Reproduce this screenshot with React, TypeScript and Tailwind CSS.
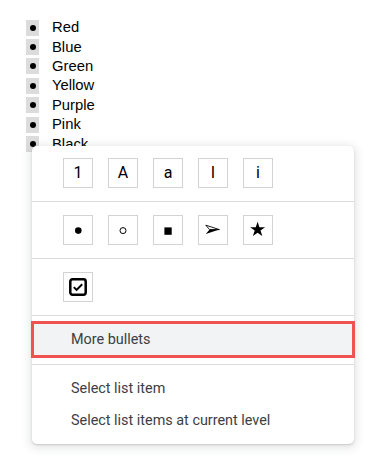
import type { ReactNode } from "react";

const COLORS = ["Red", "Blue", "Green", "Yellow", "Purple", "Pink", "Black"];

function GlyphBox({ children }: { children: ReactNode }) {
  return (
    <div className="w-[30px] h-[30px] border border-[#d3d3d3] flex items-center justify-center text-[16px] leading-none text-black">
      {children}
    </div>
  );
}

// svg drawn in box coordinates (0..30), the 1px border eats the edge
function BoxSvg({ children }: { children: ReactNode }) {
  return (
    <svg width="28" height="28" viewBox="1 1 28 28" className="block">
      {children}
    </svg>
  );
}

function Divider() {
  return <div className="h-px bg-[#dadce0]" />;
}

export default function App() {
  return (
    <div className="relative w-[390px] h-[460px] bg-white overflow-hidden">
      {/* the list under the menu */}
      <ul className="pt-[18px] pl-[26px] font-['Liberation_Sans',Arial,sans-serif] text-[14.8px] text-black">
        {COLORS.map((c) => (
          <li key={c} className="flex items-center h-[19.4px]">
            <span className="w-[13px] h-[16px] bg-[#dcdcdc] flex items-center justify-center">
              <span className="w-[6px] h-[6px] rounded-full bg-black" />
            </span>
            <span className="ml-[13px] leading-none">{c}</span>
          </li>
        ))}
      </ul>

      {/* bullet menu */}
      <div className="absolute left-[32px] top-[146px] w-[322px] bg-white rounded-[5px] shadow-[0_2px_10px_2px_rgba(60,64,67,0.14),0_1px_2px_rgba(60,64,67,0.2)] font-['Roboto',Arial,sans-serif] pb-[7px]">
        <div className="flex gap-[15px] pl-[31px] pt-[12px] pb-[13px]">
          <GlyphBox>1</GlyphBox>
          <GlyphBox>A</GlyphBox>
          <GlyphBox>a</GlyphBox>
          <GlyphBox>I</GlyphBox>
          <GlyphBox>i</GlyphBox>
        </div>
        <Divider />
        <div className="flex gap-[15px] pl-[31px] py-[13px]">
          <GlyphBox>
            <BoxSvg>
              <circle cx="15.3" cy="15.6" r="3.3" fill="#000" />
            </BoxSvg>
          </GlyphBox>
          <GlyphBox>
            <BoxSvg>
              <circle cx="15" cy="15.6" r="3" fill="none" stroke="#000" strokeWidth="1" />
            </BoxSvg>
          </GlyphBox>
          <GlyphBox>
            <BoxSvg>
              <rect x="11.4" y="12.4" width="7.3" height="7.4" fill="#000" />
            </BoxSvg>
          </GlyphBox>
          <GlyphBox>
            <BoxSvg>
              <path d="M7.8 10.2 L21.4 14.6 L11.6 14.6 Z" fill="none" stroke="#000" strokeWidth="0.9" strokeLinejoin="round" />
              <path d="M7.8 19 L21.4 14.6 L11.6 14.6 Z" fill="#000" />
            </BoxSvg>
          </GlyphBox>
          <GlyphBox>
            <BoxSvg>
              <path
                d="M14.6 6.8 L16.4 12.2 L22.1 12.2 L17.5 15.6 L19.3 21.1 L14.6 17.7 L9.9 21.1 L11.7 15.6 L7.1 12.2 L12.8 12.2 Z"
                fill="#000"
              />
            </BoxSvg>
          </GlyphBox>
        </div>
        <Divider />
        <div className="flex pl-[31px] py-[13px]">
          <GlyphBox>
            <svg width="18" height="18" viewBox="0 0 18 18" className="block">
              <rect x="1.3" y="1.3" width="15.4" height="15.4" rx="2.2" fill="none" stroke="#000" strokeWidth="2.5" />
              <path d="M4.8 9.1 L7.6 11.9 L13.2 6.3" fill="none" stroke="#000" strokeWidth="2" />
            </svg>
          </GlyphBox>
        </div>
        <Divider />
        <div className="py-[5px] -mx-px">
          <div className="h-[37px] border-[3px] border-[#f0534f] bg-[#f1f3f4] flex items-center pl-[37px] text-[14.4px] text-[#3c4043]">
            More bullets
          </div>
        </div>
        <div className="pt-px">
          <Divider />
        </div>
        <div className="pt-[8px]">
          <div className="h-[32px] flex items-center pl-[39px] text-[14.4px] text-[#3c4043]">Select list item</div>
          <div className="h-[32px] flex items-center pl-[39px] text-[14.4px] text-[#3c4043]">
            Select list items at current level
          </div>
        </div>
      </div>
    </div>
  );
}
